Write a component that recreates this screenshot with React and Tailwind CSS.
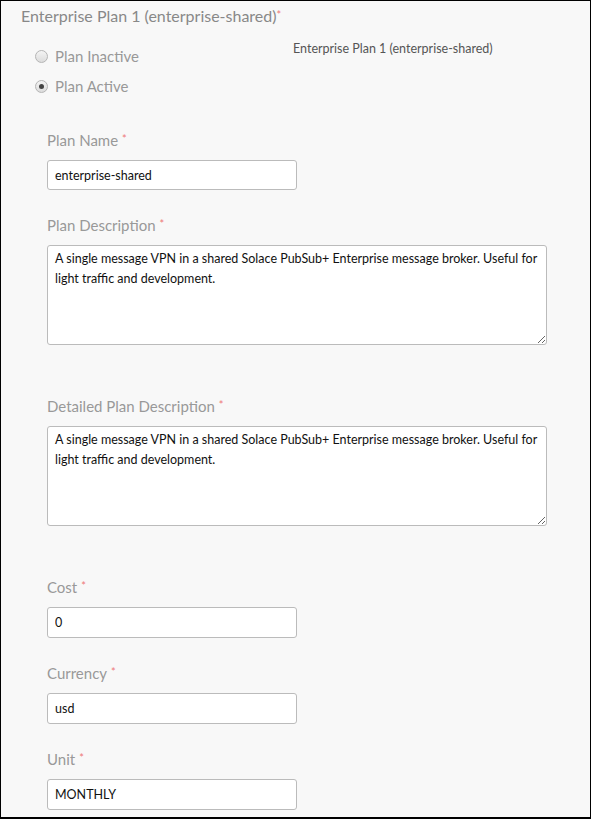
import React from 'react';

function Req() {
  return <span className="text-[#e77] ml-[4px] text-[11px] align-top relative -top-[1px]">*</span>;
}

function Label({ children }) {
  return (
    <div className="h-5 leading-5 text-[15px] text-[#999] mb-[10px]">
      {children}
      <Req />
    </div>
  );
}

function Radio({ checked, label }) {
  return (
    <div className="flex items-center h-[30px]">
      <span className="w-[13px] h-[13px] rounded-full border border-[#b5b5b5] bg-gradient-to-b from-[#f4f4f4] to-[#dcdcdc] flex items-center justify-center">
        {checked && <span className="w-[5px] h-[5px] rounded-full bg-[#444]" />}
      </span>
      <span className="ml-[7px] text-[15px] text-[#999]">{label}</span>
    </div>
  );
}

const desc =
  'A single message VPN in a shared Solace PubSub+ Enterprise message broker. Useful for light traffic and development.';

const field =
  'block w-[250px] px-[7px] bg-white border border-[#bbb] rounded-[3px] text-[12.5px] text-[#111]';
const area =
  'block w-[500px] h-[100px] px-[7px] py-[3px] bg-white border border-[#bbb] rounded-[3px] text-[12.5px] leading-[20px] text-[#111] resize-y';

export default function App() {
  return (
    <div
      className="w-[591px] h-[819px] bg-[#f8f8f8] border border-black border-b-2 overflow-hidden text-[#222]"
      style={{ fontFamily: 'Lato, "Open Sans", sans-serif' }}
    >
      <div className="pl-[20px] pt-[4px] h-[22px] leading-[22px] text-[16px] text-[#888]">
        Enterprise Plan 1 (enterprise-shared)
        <span className="text-[#e77] text-[11px] align-top relative -top-[1px]">*</span>
      </div>

      <div className="flex mt-[18px] pl-[34px]">
        <div className="w-[258px]">
          <Radio label="Plan Inactive" />
          <Radio checked label="Plan Active" />
        </div>
        <div className="text-[12.5px] text-[#555] leading-4">
          Enterprise Plan 1 (enterprise-shared)
        </div>
      </div>

      <div className="pl-[46px] pt-[29px]">
        <Label>Plan Name</Label>
        <input readOnly value="enterprise-shared" className={field + ' h-[30px]'} />

        <div className="h-[25px]" />
        <Label>Plan Description</Label>
        <textarea readOnly value={desc} className={area} />

        <div className="h-[51px]" />
        <Label>Detailed Plan Description</Label>
        <textarea readOnly value={desc} className={area} />

        <div className="h-[51px]" />
        <Label>Cost</Label>
        <input readOnly value="0" className={field + ' h-[31px]'} />

        <div className="h-[25px]" />
        <Label>Currency</Label>
        <input readOnly value="usd" className={field + ' h-[31px]'} />

        <div className="h-[25px]" />
        <Label>Unit</Label>
        <input readOnly value="MONTHLY" className={field + ' h-[31px]'} />
      </div>
    </div>
  );
}
